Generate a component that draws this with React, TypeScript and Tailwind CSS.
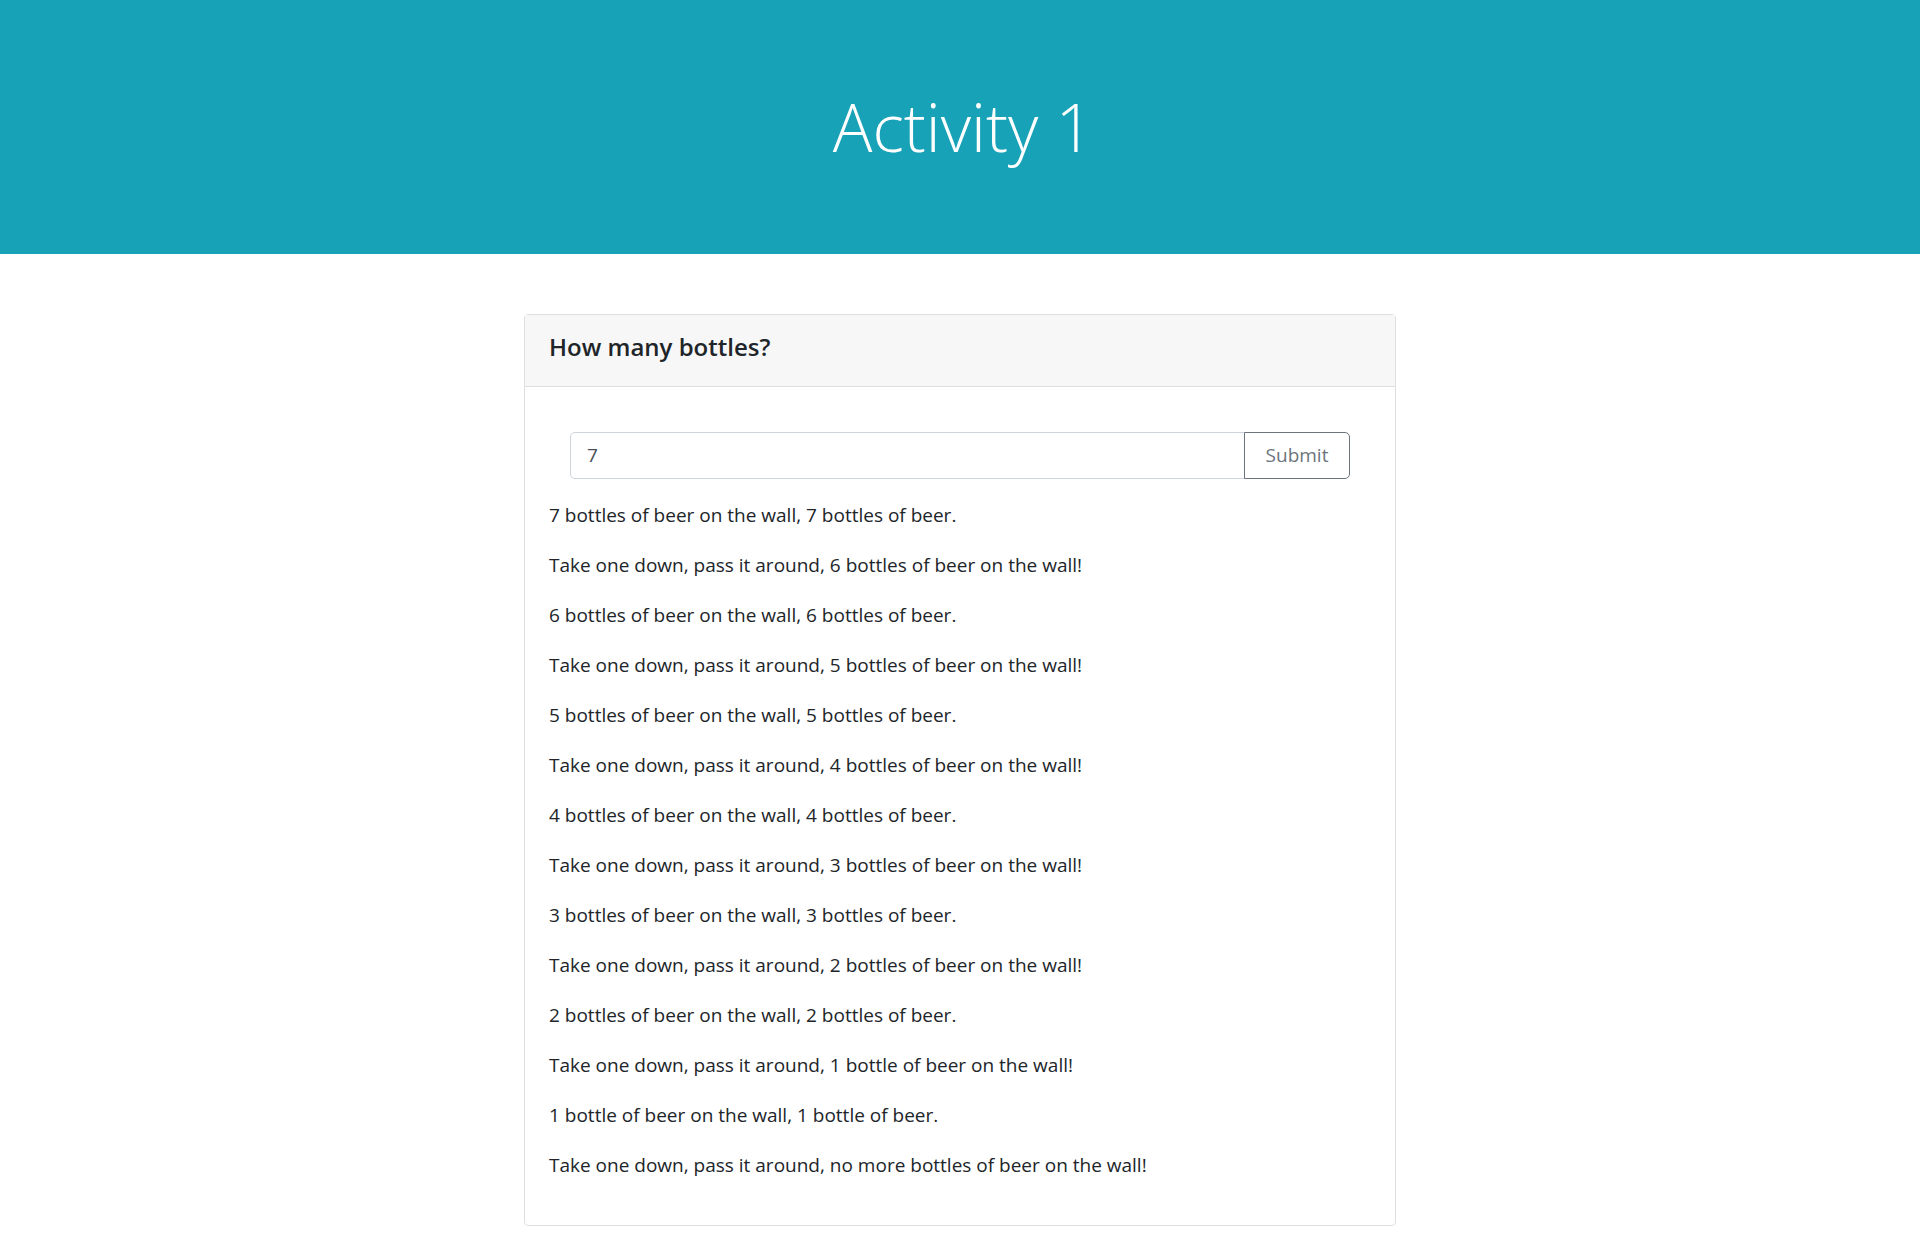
const verses = (count: number) => {
  const lines: string[] = [];
  const bottles = (n: number) => (n === 1 ? "1 bottle" : `${n} bottles`);
  for (let n = count; n > 0; n--) {
    lines.push(`${bottles(n)} of beer on the wall, ${bottles(n)} of beer.`);
    const next = n - 1 === 0 ? "no more bottles" : bottles(n - 1);
    lines.push(`Take one down, pass it around, ${next} of beer on the wall!`);
  }
  return lines;
};

export default function App() {
  const lines = verses(7);

  return (
    <div className="min-h-screen bg-white font-['Open_Sans',sans-serif] text-[#212529]">
      <header className="flex h-[254px] items-center justify-center bg-[#17a2b8]">
        <h1 className="pl-[6px] text-[66px] font-light leading-[1.2] text-white">Activity 1</h1>
      </header>

      <main className="px-6 pt-[60px] pb-[21px]">
        <div className="mx-auto w-[872px] rounded-[4px] border border-[#dfdfdf]">
          <div className="flex h-[72px] items-center border-b border-[#dfdfdf] bg-[#f7f7f7] px-6 pb-[8px]">
            <h4 className="text-[24px] font-semibold">How many bottles?</h4>
          </div>

          <div className="pt-[45px] pb-[25px]">
            <form className="mx-[45px] flex h-[47px]" onSubmit={(e) => e.preventDefault()}>
              <input
                type="text"
                defaultValue="7"
                className="min-w-0 flex-1 rounded-l-[5px] border border-[#ced4da] px-4 text-[19px] text-[#495057] outline-none"
              />
              <button
                type="submit"
                className="-ml-px w-[106px] rounded-r-[5px] border border-[#6c757d] text-[19px] text-[#6c757d]"
              >
                Submit
              </button>
            </form>

            <div className="mt-[21px] px-6">
              {lines.map((line, i) => (
                <p key={i} className="mb-5 text-[19px] leading-[30px]">
                  {line}
                </p>
              ))}
            </div>
          </div>
        </div>
      </main>
    </div>
  );
}
